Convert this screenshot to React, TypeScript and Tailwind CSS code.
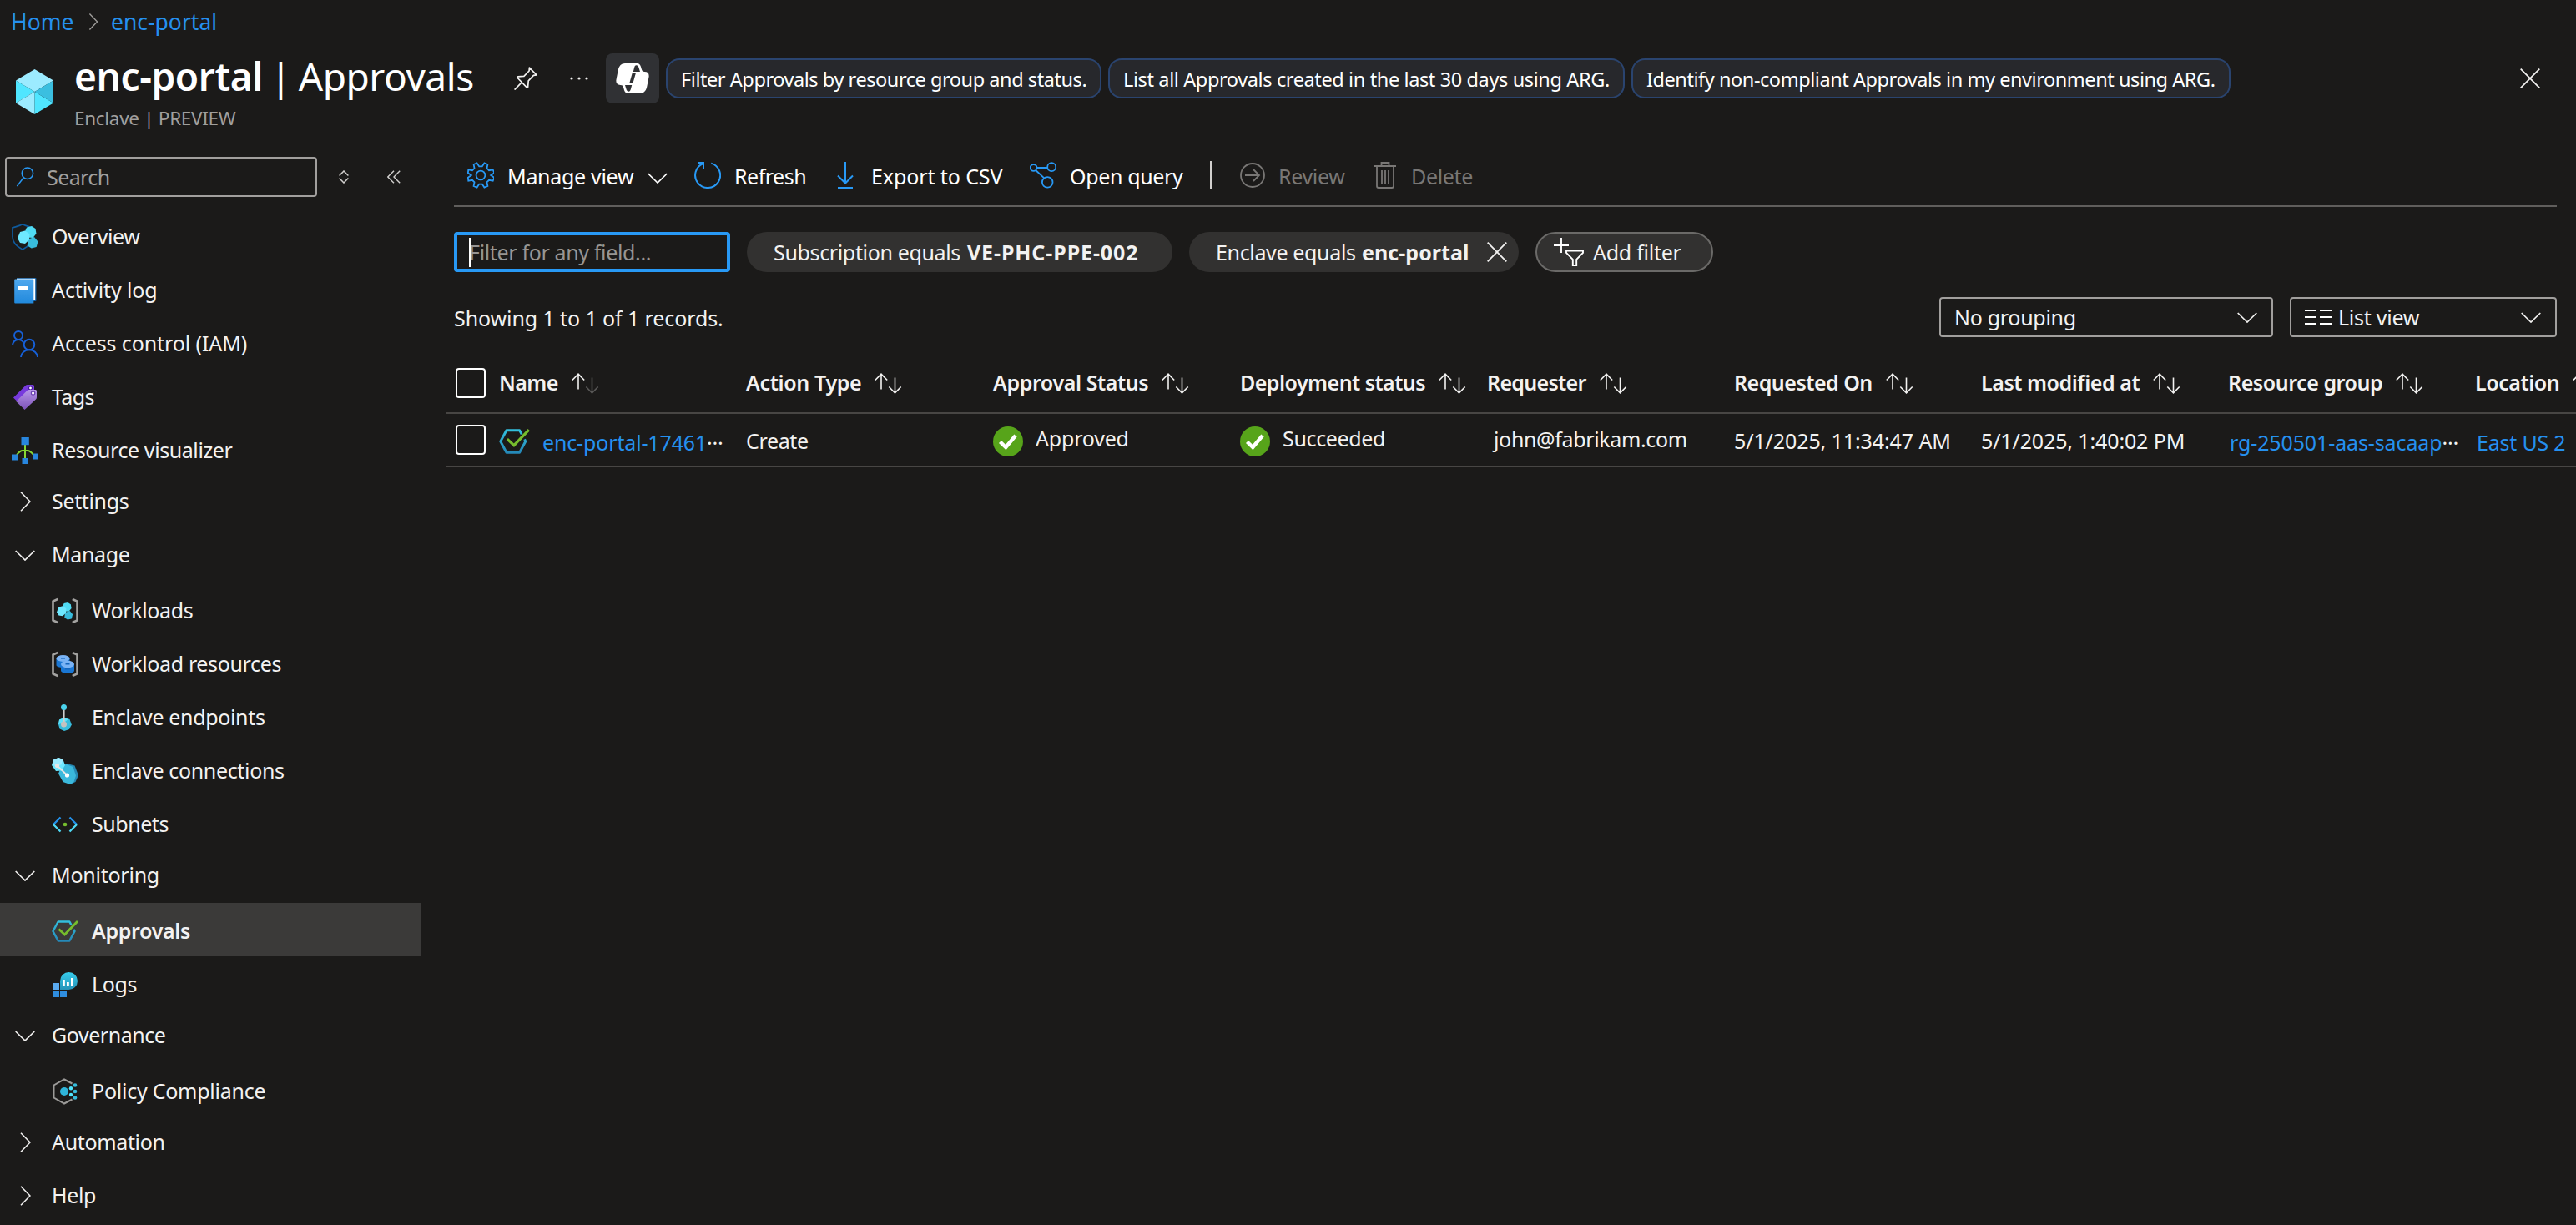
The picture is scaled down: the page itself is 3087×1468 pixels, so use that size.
import type { ReactNode } from "react";
import clsx from "clsx";

interface IconProps {
  className?: string;
}

/* ---------- line icons ---------- */

function ChevronRight({ className }: IconProps) {
  return (
    <svg viewBox="0 0 13 24" fill="none" stroke="currentColor" strokeWidth="1.6" className={className}>
      <path d="M1 .7 12 12 1 23.3" />
    </svg>
  );
}

function ChevronDown({ className }: IconProps) {
  return (
    <svg viewBox="0 0 24 13" fill="none" stroke="currentColor" strokeWidth="1.7" className={className}>
      <path d="M.7 1 12 12 23.3 1" />
    </svg>
  );
}

function Cross({ className }: IconProps) {
  return (
    <svg viewBox="0 0 24 24" fill="none" stroke="currentColor" strokeWidth="1.8" className={className}>
      <path d="M.7.7l22.6 22.6M23.3.7.7 23.3" />
    </svg>
  );
}

function SearchIcon({ className }: IconProps) {
  return (
    <svg viewBox="0 0 24 28" fill="none" stroke="#2899f5" strokeWidth="1.8" className={className}>
      <circle cx="15.4" cy="9" r="7.8" />
      <path d="M10 14.8.8 27" />
    </svg>
  );
}

function PinIcon({ className }: IconProps) {
  return (
    <svg viewBox="0 0 28 28" fill="none" stroke="#f3f2f1" strokeWidth="1.7" strokeLinejoin="round" className={className}>
      <path d="M18.4 1.2 27 9.8l-3.6.5-6.2 6.6-.6 7.6-1.3.4L4.3 13.5l.4-1.7 7.2-.4 6.2-6.4z" />
      <path d="M9.6 18.4.6 27.6" />
    </svg>
  );
}

function GearIcon({ className }: IconProps) {
  return (
    <svg viewBox="0 0 32 32" fill="none" stroke="#2899f5" strokeWidth="1.8" className={className}>
      <circle cx="16" cy="16" r="5.4" />
      <path d="M11.6 1.4 14.2 5.4h3.6l2.6-4 4 1.6-.9 4.7 2.5 2.5 4.7-.9 1.5 4-4 2.7 4 2.7-1.5 4-4.7-.9-2.5 2.5.9 4.7-4 1.6-2.6-4h-3.6l-2.6 4-4-1.6.9-4.7L6 21.8l-4.7.9-.5-4 4-2.7-4-2.7.5-4 4.7.9 2.5-2.5-.9-4.7z" />
    </svg>
  );
}

function RefreshIcon({ className }: IconProps) {
  return (
    <svg viewBox="0 0 32 32" fill="none" stroke="#2899f5" strokeWidth="2" className={className}>
      <path d="M20.2 1.6A15 15 0 1 1 10.8 2" />
      <path d="M4 1h7v7" />
    </svg>
  );
}

function DownloadIcon({ className }: IconProps) {
  return (
    <svg viewBox="0 0 20 32" fill="none" stroke="#2899f5" strokeWidth="2" className={className}>
      <path d="M10 0v25.5M1 16.5l9 9 9-9M1 31h18" />
    </svg>
  );
}

function QueryIcon({ className }: IconProps) {
  return (
    <svg viewBox="0 0 32 32" fill="none" stroke="#2899f5" strokeWidth="1.8" className={className}>
      <circle cx="4.6" cy="7" r="3.9" />
      <circle cx="26.2" cy="6.2" r="5" />
      <circle cx="21.2" cy="24.4" r="6.3" />
      <path d="M8.5 7h12.7M7.2 10l10 9.4" />
    </svg>
  );
}

function ReviewIcon({ className }: IconProps) {
  return (
    <svg viewBox="0 0 30 30" fill="none" stroke="#797775" strokeWidth="1.8" className={className}>
      <circle cx="15" cy="15" r="14" />
      <path d="M6 15h17M16 8l7 7-7 7" />
    </svg>
  );
}

function TrashIcon({ className }: IconProps) {
  return (
    <svg viewBox="0 0 26 32" fill="none" stroke="#797775" strokeWidth="1.8" className={className}>
      <path d="M0 5h26M8.5 5V1h9v4M3 5v24q0 2 2 2h16q2 0 2-2V5M9 10v16M13 10v16M17 10v16" />
    </svg>
  );
}

function CopilotIcon({ className }: IconProps) {
  return (
    <svg viewBox="0 0 40 36" className={className}>
      <path
        fill="#fff"
        d="M11 0h14.5c3.5 0 4.3 3 5.2 6.5.7 2.5 1.3 3.5 3.8 3.5 4 0 5.7 2.6 5 6.5l-2.3 11.8C36 33 33.6 36 29 36H14.5c-3.5 0-4.3-3-5.2-6.500C8.6 27 8 26 5.500 26 1.5 26-.2 23.4.5 19.500L2.800 7.700C4 3 6.400 0 11 0z"
      />
      <path
        fill="#303134"
        d="M24.500 2.200c1.800 0 2.600 1.400 3.200 3.600L29 10h-8.200l1.200-4.600c.5-2 1.200-3.200 2.500-3.200zM19.600 12h4.200l-3.400 12h-4.200zM11 26h8.200l-1.200 4.600c-.5 2-1.200 3.200-2.500 3.200-1.800 0-2.600-1.400-3.200-3.600z"
      />
    </svg>
  );
}

function AddFilterIcon({ className }: IconProps) {
  return (
    <svg viewBox="0 0 36 34" fill="none" stroke="#fff" strokeWidth="1.9" className={className}>
      <path d="M9 0v18M0 9h18" />
      <path d="M15 15.5h20v2.3l-7.8 8V33h-4.4v-7.2l-7.8-8z" />
    </svg>
  );
}

function ListIcon({ className }: IconProps) {
  return (
    <svg viewBox="0 0 32 18" fill="none" stroke="#fff" strokeWidth="2" className={className}>
      <path d="M0 1h14M18 1h14M0 9h14M18 9h14M0 17h14M18 17h14" />
    </svg>
  );
}

function SortArrows({ ascending }: { ascending?: boolean }) {
  return (
    <svg viewBox="0 0 33 25" fill="none" stroke="#f3f2f1" strokeWidth="1.6" className="h-[25px] w-[33px] shrink-0">
      <path d="M8 19.5V1.5M.8 8.500 8 1.200l7.200 7.300" />
      <path d="M24.500 5.500v18M17.300 16.500l7.200 7.300 7.200-7.300" stroke={ascending ? "#5a5958" : undefined} />
    </svg>
  );
}

/* ---------- service icons ---------- */

function EnclaveIcon({ className }: IconProps) {
  return (
    <svg viewBox="0 0 45 54" className={className}>
      <path fill="#9cebff" d="M22.5 0 45 13.5 22.5 27 0 13.5z" />
      <path fill="#50e6ff" d="M0 13.5 22.5 27 0 40.5z" />
      <path fill="#9cebff" d="M22.5 27v27L0 40.5z" />
      <path fill="#50e6ff" d="M22.5 27v27L45 40.5z" />
      <path fill="#3bbfe0" d="M45 13.5v27L22.5 27z" />
    </svg>
  );
}

function Cluster() {
  return (
    <>
      <path fill="#50dcf4" d="M18 4.5 24 3l4.500 3 1 6-4 5-6.500-.5-4-5z" />
      <path fill="#38bcdc" d="M20 18.500l7-2.500 4.500 5.500-1.800 6.500-6 1.500-5-3z" />
      <path fill="#6ee8ff" d="m10 10 6-1.500 5.500 4-.5 7-5 4.500-6-1-3-5.500z" />
    </>
  );
}

function OverviewIcon() {
  return (
    <svg viewBox="0 0 32 32" className="size-8">
      <path
        fill="none"
        stroke="#0f5b9e"
        strokeWidth="1.7"
        d="M13 1c3.500 1 7 3 12 3.800v11C25 23 19 28 13 31 7 28 1 23 1 15.800v-11C6 4 9.500 2 13 1z"
      />
      <Cluster />
    </svg>
  );
}

function ActivityLogIcon() {
  return (
    <svg viewBox="0 0 32 32" className="size-8">
      <defs>
        <linearGradient id="log" x1="0" y1="0" x2="0" y2="1">
          <stop offset="0" stopColor="#4fa8ee" />
          <stop offset="1" stopColor="#2189dc" />
        </linearGradient>
      </defs>
      <path fill="#0f5b9e" d="M6 1h22.500q1 0 1 1v26q0 1-1 1H6z" />
      <path fill="#fff" d="M6 1.800h22.200V27H6z" />
      <path fill="url(#log)" d="M3.200 3.500q0-1 1-1h20.600q1.500 0 1.500 1.500v27.500H4.200q-1 0-1-1z" />
      <path fill="#fff" d="M8 11h12v4.500H8z" />
    </svg>
  );
}

function AccessIcon() {
  return (
    <svg viewBox="0 0 32 32" fill="none" stroke="#1660d8" strokeWidth="1.9" className="size-8">
      <circle cx="8" cy="6" r="5" />
      <circle cx="21" cy="17" r="6.3" />
      <path d="M1 18c0-4 3-7 7-7 3 0 4.800 1.400 6.400 3.700M11 32c.4-5 4.600-8.700 10-8.700S30.600 27 31 32" />
    </svg>
  );
}

function TagsIcon() {
  return (
    <svg viewBox="0 0 32 32" className="size-8">
      <defs>
        <linearGradient id="tag" x1="0" y1="0" x2="0" y2="1">
          <stop offset="0" stopColor="#b796e8" />
          <stop offset="1" stopColor="#7d52b8" />
        </linearGradient>
      </defs>
      <path fill="#773adc" d="M2 16.500 16.500 2q1-1 2.500-1h6q2 0 2 2v6L9 21.500l-3-1z" />
      <circle cx="22.5" cy="5" r="2" fill="#fff" stroke="#4a1f9c" strokeWidth="1.2" />
      <path fill="url(#tag)" d="M5.300 21 18.500 8q1-1 2.500-1h7.500q1.500 0 1.500 1.500V16q0 1.500-1 2.500L15.500 31z" />
      <circle cx="25.6" cy="11" r="2.2" fill="#fff" stroke="#6a3fb0" strokeWidth="1.2" />
    </svg>
  );
}

function VisualizerIcon() {
  return (
    <svg viewBox="0 0 32 32" className="size-8">
      <path fill="none" stroke="#86d633" strokeWidth="2" d="M16 8v18M6 21q4-5 7-5h6q3 0 7 5" />
      <path
        fill="#2886de"
        d="M11.500 0h9.300v9.300h-9.300zM0 20.500h7V27.500H0zM12.500 25h7v7h-7zM25 19.500h7v7h-7z"
      />
    </svg>
  );
}

function Brackets() {
  return (
    <path fill="none" stroke="#a3a2a0" strokeWidth="2.6" d="M7.200 2 1.500 4.500v23L7.200 30M24.800 2l5.700 2.500v23L24.800 30" />
  );
}

function WorkloadsIcon() {
  return (
    <svg viewBox="0 0 32 32" className="size-8">
      <Brackets />
      <g transform="translate(.6 3.6) scale(.78)">
        <Cluster />
      </g>
    </svg>
  );
}

function WorkloadResourcesIcon() {
  return (
    <svg viewBox="0 0 32 32" className="size-8">
      <Brackets />
      <path fill="#1a77d4" d="M5.500 9h16v8c0 2-4 3-8 3s-8-1-8-3z" />
      <ellipse cx="13.5" cy="9" rx="8" ry="3.9" fill="#7ab3f5" />
      <path fill="#1466bd" d="M11 8h5v1.600h-5z" />
      <path fill="#1a77d4" d="M11 16h16v7.500c0 2-3.500 3.500-8 3.500s-8-1.500-8-3.500z" />
      <ellipse cx="19" cy="16" rx="8" ry="4.2" fill="#7ab3f5" />
      <path fill="#1466bd" d="M16.500 14.800h5v1.600h-5zM16 21h6v1.400h-6z" />
    </svg>
  );
}

function EndpointsIcon() {
  return (
    <svg viewBox="0 0 32 32" className="size-8">
      <path fill="#38bcdc" d="M9 18.500 15 16l6.500 2 2.300 6.500L21 30l-6 2-5.500-2.500L8 24z" />
      <path fill="#5fe3fb" d="m9 18.500 6-2.500 4.500 2L15 22l-7 2z" />
      <path stroke="#cfcecd" strokeWidth="2.2" d="M14.500 4v20" />
      <circle cx="14.5" cy="3.5" r="3.5" fill="#4bd3ec" />
      <circle cx="14.5" cy="24" r="3.5" fill="#c4c2c0" />
    </svg>
  );
}

function ConnectionsIcon() {
  return (
    <svg viewBox="0 0 32 32" className="size-8">
      <path fill="#2689b4" d="m12 9.500 6-2.500 9.500 2.500L32 21l-3.500 8-6.500 3z" />
      <path fill="#3bb9dc" d="m12 9.500 6-1.500 7.500 3L29 21.500 26.500 29 22 32l-8.500-3L8 19z" />
      <path fill="#6ee8ff" d="M2 2.500 8 0l5.500 2L16 9l-4 6.500-7 .5-5-7z" />
      <path fill="#9cebff" d="M2 2.500 8 0l5.500 2-2 6-6 3-4.500-3z" />
      <path stroke="#e6e6e6" strokeWidth="1.8" d="M6.500 9.500 18.500 21" />
      <circle cx="6.5" cy="9.5" r="2.6" fill="#e6e6e6" />
      <circle cx="18.5" cy="21" r="2.6" fill="#fff" />
    </svg>
  );
}

function SubnetsIcon() {
  return (
    <svg viewBox="0 0 32 32" fill="none" strokeWidth="2.3" className="size-8">
      <path stroke="#2491ea" d="M10.500 7.500 2 16M21.500 7.500 30 16" />
      <path stroke="#50d9f5" d="m2 16 8.500 8.500M30 16l-8.500 8.500" />
      <circle cx="16" cy="16" r="2.3" fill="#76bc2d" />
    </svg>
  );
}

function ApprovalIcon({ className }: IconProps) {
  return (
    <svg viewBox="0 0 32 26" fill="none" className={className}>
      <defs>
        <linearGradient id="hex" x1="0" y1="0" x2="0" y2="1">
          <stop offset="0" stopColor="#32bedd" />
          <stop offset="1" stopColor="#2589b8" />
        </linearGradient>
      </defs>
      <path
        stroke="url(#hex)"
        strokeWidth="2.5"
        strokeLinejoin="round"
        d="M23.500 5.500 21.300 1.500H7.700L1.500 13l6.200 11.500h13.600L27.500 13l-1-2.200"
      />
      <path stroke="#76bc2d" strokeWidth="2.8" d="m8.500 10.500 7 6.500L31 1" />
    </svg>
  );
}

function LogsIcon() {
  return (
    <svg viewBox="0 0 32 32" className="size-8">
      <defs>
        <linearGradient id="logs" x1="0" y1="0" x2="0" y2="1">
          <stop offset="0" stopColor="#37cdec" />
          <stop offset="1" stopColor="#2693b8" />
        </linearGradient>
      </defs>
      <path fill="#5aaaf0" d="M1 14h8v8H1z" />
      <path fill="#2f8ee0" d="M1 23h8v8H1zM10 23h8v8h-8z" />
      <path fill="url(#logs)" d="M10 22V11.500A10.500 10.500 0 1 1 20.500 22z" />
      <path fill="#fff" d="M13 10h2.800v7.500H13zM18 13h2.800v4.500H18zM23 8h2.800v9.500H23z" />
    </svg>
  );
}

function PolicyIcon() {
  return (
    <svg viewBox="0 0 32 32" className="size-8">
      <path fill="none" stroke="#9b9a98" strokeWidth="2" d="m24.500 6.500-9.500-5L2.500 8.500v15l12.500 7 9.500-5" />
      <circle cx="15" cy="16" r="5" fill="#2fb5da" />
      <g fill="#50e6ff">
        <circle cx="23" cy="12.3" r="2.2" />
        <circle cx="23" cy="20" r="2.2" />
      </g>
      <g fill="#38bcdc">
        <circle cx="28" cy="8.5" r="2.3" />
        <circle cx="28" cy="16" r="2.3" />
        <circle cx="28" cy="23.5" r="2.3" />
      </g>
    </svg>
  );
}

function StatusOk() {
  return (
    <svg viewBox="0 0 36 36" className="size-9 shrink-0">
      <circle cx="18" cy="18" r="18" fill="#57a41a" />
      <path fill="none" stroke="#fff" strokeWidth="4.4" d="m8.500 18.500 6.800 6.500L27 11" />
    </svg>
  );
}

/* ---------- sidebar ---------- */

interface NavEntry {
  label: string;
  icon?: ReactNode;
  group?: "open" | "closed";
  nested?: boolean;
  active?: boolean;
  tracking?: string;
}

const nav: NavEntry[] = [
  { label: "Overview", icon: <OverviewIcon />, tracking: "tracking-[-0.45px]" },
  { label: "Activity log", icon: <ActivityLogIcon />, tracking: "tracking-[-0.1px]" },
  { label: "Access control (IAM)", icon: <AccessIcon />, tracking: "tracking-[-0.1px]" },
  { label: "Tags", icon: <TagsIcon />, tracking: "tracking-[-0.6px]" },
  { label: "Resource visualizer", icon: <VisualizerIcon />, tracking: "tracking-[-0.42px]" },
  { label: "Settings", group: "closed" },
  { label: "Manage", group: "open" },
  { label: "Workloads", icon: <WorkloadsIcon />, nested: true },
  { label: "Workload resources", icon: <WorkloadResourcesIcon />, nested: true },
  { label: "Enclave endpoints", icon: <EndpointsIcon />, nested: true },
  { label: "Enclave connections", icon: <ConnectionsIcon />, nested: true },
  { label: "Subnets", icon: <SubnetsIcon />, nested: true, tracking: "tracking-[-0.45px]" },
  { label: "Monitoring", group: "open", tracking: "tracking-[-0.25px]" },
  {
    label: "Approvals",
    icon: <ApprovalIcon className="h-[26px] w-8" />,
    nested: true,
    active: true,
    tracking: "tracking-[-0.35px]",
  },
  { label: "Logs", icon: <LogsIcon />, nested: true },
  { label: "Governance", group: "open", tracking: "tracking-[-0.45px]" },
  { label: "Policy Compliance", icon: <PolicyIcon />, nested: true, tracking: "tracking-[-0.25px]" },
  { label: "Automation", group: "closed" },
  { label: "Help", group: "closed" },
];

function NavItem({ entry }: { entry: NavEntry }) {
  return (
    <li
      className={clsx(
        "flex h-16 items-center gap-4",
        entry.nested ? "pl-[62px]" : "pl-[14px]",
        entry.group ? "pb-[2px]" : "pt-[4px]",
        entry.active && "bg-[#3b3a39] font-semibold"
      )}
    >
      <span className="flex w-8 shrink-0 justify-center">
        {entry.group === "open" && <ChevronDown className="h-[13px] w-6" />}
        {entry.group === "closed" && <ChevronRight className="h-6 w-[13px]" />}
        {entry.icon}
      </span>
      <span className={clsx("pb-[2px] whitespace-nowrap", entry.tracking ?? "tracking-[-0.35px]")}>
        {entry.label}
      </span>
    </li>
  );
}

/* ---------- table ---------- */

const columns = [
  { label: "Name", tracking: "tracking-[-0.6px]", ascending: true },
  { label: "Action Type", tracking: "tracking-[-0.35px]" },
  { label: "Approval Status", tracking: "tracking-[-0.4px]" },
  { label: "Deployment status", tracking: "tracking-[-0.53px]" },
  { label: "Requester", tracking: "tracking-[-0.7px]" },
  { label: "Requested On", tracking: "tracking-[-0.5px]" },
  { label: "Last modified at", tracking: "tracking-[-0.45px]" },
  { label: "Resource group", tracking: "tracking-[-0.45px]" },
  { label: "Location", tracking: "tracking-[-0.45px]" },
];

function Checkbox() {
  return <span className="mr-4 ml-3 size-9 shrink-0 rounded-[4px] border-2 border-white" />;
}

function Cell({ children, className }: { children: ReactNode; className?: string }) {
  return <div className={clsx("flex w-[296px] shrink-0 items-center whitespace-nowrap", className)}>{children}</div>;
}

function Suggestion({ children, className }: { children: ReactNode; className: string }) {
  return (
    <button
      type="button"
      className={clsx(
        "mt-[19px] mr-2 h-12 shrink-0 rounded-[16px] border-2 border-[#2a446f] bg-[#27282c] pt-[2px] pl-4 text-left text-[23.5px] whitespace-nowrap text-white",
        className
      )}
    >
      {children}
    </button>
  );
}

export default function App() {
  return (
    <div className="h-[1468px] w-[3087px] overflow-hidden bg-[#1b1a19] font-['Noto_Sans','Open_Sans',sans-serif] text-[25px] leading-[34px] text-[#f3f2f1]">
      <nav className="flex h-[51px] items-center pt-px pl-[13px] text-[26.5px] text-[#2590ef]">
        <a className="w-[93px]">Home</a>
        <ChevronRight className="mr-[15px] h-5 w-3 text-[#a19f9d]" />
        <a>enc-portal</a>
      </nav>

      <header className="flex h-[137px] items-start">
        <EnclaveIcon className="mt-[32px] ml-[19px] h-[54px] w-[45px] shrink-0" />
        <div className="mt-[10px] ml-[25px] w-[527px] shrink-0">
          <h1 className="text-[46px] leading-[60px] tracking-[-0.45px] [word-spacing:-2.5px] whitespace-nowrap text-white">
            <strong className="font-semibold tracking-[-0.4px]">enc-portal</strong> | Approvals
          </h1>
          <p className="mt-[5px] text-[22.5px] leading-8 tracking-[-0.3px] text-[#a19f9d]">Enclave | PREVIEW</p>
        </div>
        <PinIcon className="mt-[29px] size-7 shrink-0" />
        <svg viewBox="0 0 22 4" fill="#f3f2f1" className="mt-[41px] mr-[21px] ml-[39px] h-1 w-[22px] shrink-0">
          <circle cx="2" cy="2" r="1.6" />
          <circle cx="11" cy="2" r="1.6" />
          <circle cx="20" cy="2" r="1.6" />
        </svg>
        <span className="mt-[13px] mr-2 flex h-[60px] w-16 shrink-0 items-center justify-center rounded-lg bg-[#303134]">
          <CopilotIcon className="h-9 w-10" />
        </span>
        <Suggestion className="w-[522px] tracking-[-0.44px]">Filter Approvals by resource group and status.</Suggestion>
        <Suggestion className="w-[619px] tracking-[-0.38px]">
          List all Approvals created in the last 30 days using ARG.
        </Suggestion>
        <Suggestion className="w-[718px] tracking-[-0.44px]">
          Identify non-compliant Approvals in my environment using ARG.
        </Suggestion>
        <Cross className="mt-[31px] mr-[43px] ml-auto size-6 shrink-0" />
      </header>

      <div className="flex">
        <aside className="w-[504px] shrink-0">
          <div className="flex h-12 items-center">
            <div className="ml-[6px] flex h-12 w-[374px] items-center rounded-[4px] border-2 border-[#a19f9d] pl-[10px] text-[#a19f9d]">
              <SearchIcon className="mr-[14px] h-6 w-6" />
              <span className="tracking-[-0.6px]">Search</span>
            </div>
            <svg viewBox="0 0 12 16" fill="none" stroke="#d2d0ce" strokeWidth="1.5" className="ml-[26px] h-4 w-3">
              <path d="m.6 6.500 5.400-5.500 5.400 5.500M.6 9.500 6 15l5.400-5.500" />
            </svg>
            <svg viewBox="0 0 16 16" fill="none" stroke="#d2d0ce" strokeWidth="1.4" className="ml-[46px] size-4">
              <path d="M8 .7.8 8 8 15.300M15.200.7 8 8l7.200 7.300" />
            </svg>
          </div>
          <ul className="mt-[14px]">
            {nav.map((entry) => (
              <NavItem key={entry.label} entry={entry} />
            ))}
          </ul>
        </aside>

        <main className="ml-[30px] min-w-0 flex-1">
          <div className="mr-[23px] ml-[10px]">
            <div className="flex h-11 items-center whitespace-nowrap text-white">
              <GearIcon className="mr-4 ml-4 size-8 shrink-0" />
              <span className="w-[168px] pt-[2px] tracking-[-0.3px]">Manage view</span>
              <ChevronDown className="mt-[6px] mr-8 h-[13px] w-6" />
              <RefreshIcon className="mr-4 size-8" />
              <span className="w-[123px] pt-[2px] tracking-[-0.5px]">Refresh</span>
              <DownloadIcon className="mr-[21px] h-8 w-5" />
              <span className="w-[190px] pt-[2px] tracking-[-0.1px]">Export to CSV</span>
              <QueryIcon className="mr-[16px] size-8" />
              <span className="w-[168px] pt-[2px] tracking-[-0.35px]">Open query</span>
              <span className="mr-[34px] h-[34px] w-[2px] bg-[#d2d0ce]" />
              <ReviewIcon className="mr-4 size-[30px]" />
              <span className="w-[115px] pt-[2px] tracking-[-0.35px] text-[#797775]">Review</span>
              <TrashIcon className="mr-[18px] h-8 w-[26px]" />
              <span className="pt-[2px] tracking-[-0.35px] text-[#797775]">Delete</span>
            </div>

            <div className="mt-[14px] h-[2px] bg-[#605e5c]" />

            <div className="mt-[30px] flex h-12 items-center whitespace-nowrap">
              <div className="flex h-12 w-[331px] items-center rounded-[4px] border-4 border-[#2899f5] pl-[14px]">
                <span className="h-[35px] w-[2px] bg-white" />
                <span className="-ml-[2px] pb-px tracking-[-0.35px] text-[#979593]">Filter for any field...</span>
              </div>
              <div className="ml-5 flex h-12 w-[510px] items-center rounded-full bg-[#323130] pb-px pl-8">
                <span className="pr-2 tracking-[-0.35px]">Subscription equals</span>
                <b className="font-bold tracking-[0.9px]">VE-PHC-PPE-002</b>
              </div>
              <div className="ml-5 flex h-12 w-[395px] items-center rounded-full bg-[#323130] pb-px pl-8">
                <span className="w-[175px] tracking-[-0.35px]">Enclave equals</span>
                <b className="w-[150px] font-bold tracking-[0.05px]">enc-portal</b>
                <Cross className="size-6" />
              </div>
              <div className="ml-5 flex h-12 w-[213px] items-center rounded-full border-2 border-[#6b6a68] bg-[#323130] pb-px pl-5">
                <AddFilterIcon className="mr-[11px] h-[34px] w-9" />
                <span className="tracking-[-0.25px]">Add filter</span>
              </div>
            </div>

            <div className="mt-[30px] flex h-12 items-center whitespace-nowrap">
              <span className="mr-auto pt-[2px] tracking-[-0.1px]">Showing 1 to 1 of 1 records.</span>
              <div className="flex h-12 w-[400px] items-center justify-between rounded-[4px] border-2 border-[#a19f9d] pr-4 pl-4">
                <span className="tracking-[-0.3px]">No grouping</span>
                <ChevronDown className="h-[13px] w-[26px]" />
              </div>
              <div className="ml-5 flex h-12 w-[320px] items-center rounded-[4px] border-2 border-[#a19f9d] pr-4 pl-4">
                <ListIcon className="mr-2 h-[18px] w-8" />
                <span className="tracking-[-0.25px]">List view</span>
                <ChevronDown className="ml-auto h-[13px] w-[26px]" />
              </div>
            </div>
          </div>

          <div className="mt-5 flex h-[72px] items-center overflow-hidden border-b-2 border-[#484644] font-semibold">
            <Checkbox />
            {columns.map((c) => (
              <Cell key={c.label} className="gap-4">
                <span className={clsx("pb-[2px]", c.tracking)}>{c.label}</span>
                <SortArrows ascending={c.ascending} />
              </Cell>
            ))}
          </div>
          <div className="flex h-16 items-center overflow-hidden border-b-2 border-[#484644]">
            <Checkbox />
            <Cell>
              <ApprovalIcon className="mt-[3px] mr-[15px] h-[30px] w-[37px]" />
              <a className="mt-[5px] tracking-[-0.15px] text-[#2590ef]">enc-portal-17461</a>
              <span className="-mt-[8px]">…</span>
            </Cell>
            <Cell className="pt-[2px] tracking-[-0.35px]">Create</Cell>
            <Cell className="gap-[15px] pt-[3px]">
              <StatusOk />
              <span className="-mt-[7px] tracking-[-0.2px]">Approved</span>
            </Cell>
            <Cell className="gap-[15px] pt-[3px]">
              <StatusOk />
              <span className="-mt-[7px] tracking-[-0.35px]">Succeeded</span>
            </Cell>
            <Cell className="pb-[3px] pl-2 tracking-[-0.35px]">john@fabrikam.com</Cell>
            <Cell className="pt-[2px] tracking-[-0.1px]">5/1/2025, 11:34:47 AM</Cell>
            <Cell className="pt-[2px] tracking-[-0.13px]">5/1/2025, 1:40:02 PM</Cell>
            <Cell className="pl-[2px]">
              <a className="mt-[5px] tracking-[-0.12px] text-[#2590ef]">rg-250501-aas-sacaap</a>
              <span className="-mt-[8px]">…</span>
            </Cell>
            <Cell className="pt-[5px] pl-[2px] text-[#2590ef]">
              <a className="tracking-[-0.2px]">East US 2</a>
            </Cell>
          </div>
        </main>
      </div>
    </div>
  );
}
